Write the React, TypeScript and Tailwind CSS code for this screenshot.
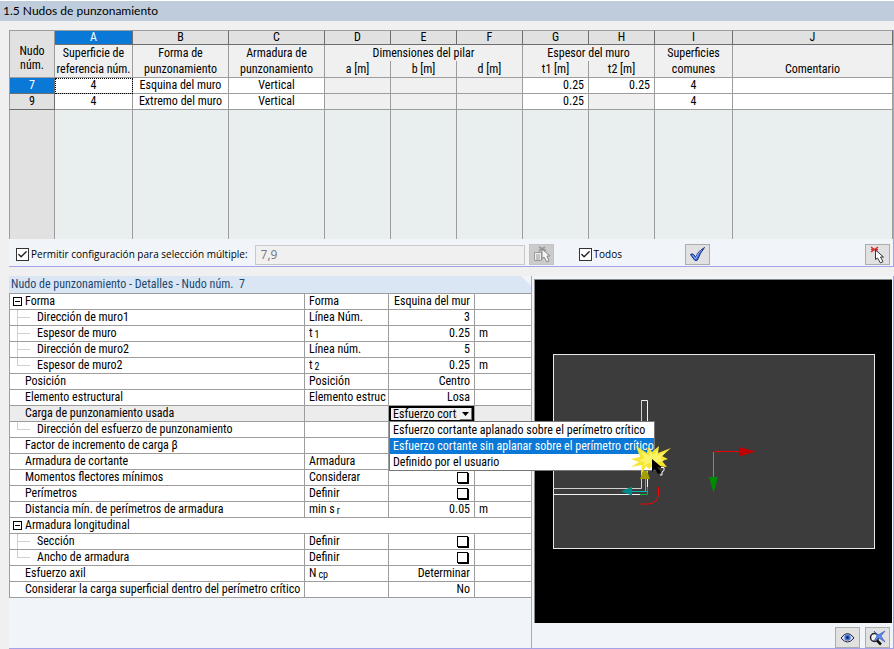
import React from 'react';
import clsx from 'clsx';
import { Check } from 'lucide-react';

const columns = [
  { letter: 'A', width: 'w-[78px]' },
  { letter: 'B', width: 'w-[96px]' },
  { letter: 'C', width: 'w-[96px]' },
  { letter: 'D', width: 'w-[66px]' },
  { letter: 'E', width: 'w-[66px]' },
  { letter: 'F', width: 'w-[66px]' },
  { letter: 'G', width: 'w-[66px]' },
  { letter: 'H', width: 'w-[66px]' },
  { letter: 'I', width: 'w-[78px]' },
  { letter: 'J', width: '' },
];

const nodes = [
  { id: 7, shape: 'Esquina del muro', t1: '0.25', t2: '0.25' },
  { id: 9, shape: 'Extremo del muro', t1: '0.25', t2: '' },
];

const loadOptions = [
  'Esfuerzo cortante aplanado sobre el perímetro crítico',
  'Esfuerzo cortante sin aplanar sobre el perímetro crítico',
  'Definido por el usuario',
];

interface DetailRow {
  label: string;
  kind?: 'group' | 'section' | 'child' | 'last';
  symbol?: string;
  sub?: string;
  value?: string;
  unit?: string;
  check?: boolean;
  combo?: boolean;
}

const details: DetailRow[] = [
  { label: 'Forma', kind: 'group', symbol: 'Forma', value: 'Esquina del mur' },
  { label: 'Dirección de muro1', kind: 'child', symbol: 'Línea Núm.', value: '3' },
  { label: 'Espesor de muro', kind: 'child', symbol: 't', sub: '1', value: '0.25', unit: 'm' },
  { label: 'Dirección de muro2', kind: 'child', symbol: 'Línea núm.', value: '5' },
  { label: 'Espesor de muro2', kind: 'last', symbol: 't', sub: '2', value: '0.25', unit: 'm' },
  { label: 'Posición', symbol: 'Posición', value: 'Centro' },
  { label: 'Elemento estructural', symbol: 'Elemento estruc', value: 'Losa' },
  { label: 'Carga de punzonamiento usada', combo: true },
  { label: 'Dirección del esfuerzo de punzonamiento', kind: 'last' },
  { label: 'Factor de incremento de carga β' },
  { label: 'Armadura de cortante', symbol: 'Armadura' },
  { label: 'Momentos flectores mínimos', symbol: 'Considerar', check: true },
  { label: 'Perímetros', symbol: 'Definir', check: true },
  { label: 'Distancia mín. de perímetros de armadura', symbol: 'min s', sub: 'r', value: '0.05', unit: 'm' },
  { label: 'Armadura longitudinal', kind: 'section' },
  { label: 'Sección', kind: 'child', symbol: 'Definir', check: true },
  { label: 'Ancho de armadura', kind: 'last', symbol: 'Definir', check: true },
  { label: 'Esfuerzo axil', symbol: 'N', sub: 'cp', value: 'Determinar' },
  { label: 'Considerar la carga superficial dentro del perímetro crítico', value: 'No' },
];

const CheckField: React.FC<{ id: string; label: string }> = ({ id, label }) => (
  <div className="flex items-center gap-[2px]">
    <span className="grid">
      <input
        id={id}
        type="checkbox"
        defaultChecked
        className="peer col-start-1 row-start-1 size-[13px] appearance-none border border-[#333] bg-white"
      />
      <Check className="pointer-events-none invisible col-start-1 row-start-1 size-[13px] p-px text-[#222] peer-checked:visible" strokeWidth={3} />
    </span>
    <label htmlFor={id} className="whitespace-nowrap">
      {label}
    </label>
  </div>
);

const IconButton: React.FC<{
  label: string;
  disabled?: boolean;
  className?: string;
  children: React.ReactNode;
}> = ({ label, disabled, className, children }) => (
  <button
    type="button"
    aria-label={label}
    disabled={disabled}
    className={clsx(
      'flex h-[21px] w-[25px] shrink-0 items-center justify-center border',
      disabled ? 'border-[#c4c4c4] bg-[#cbcbcb]' : 'border-[#adadad] bg-[#e1e1e1]',
      className
    )}
  >
    {children}
  </button>
);

const NodeTable: React.FC = () => {
  const cell = 'border-r border-b border-[#9d9d9d] p-0';
  const head = 'border-r border-[#9d9d9d] bg-[#f0f0f0] p-0 font-normal';
  return (
    <table className="w-full table-fixed border-separate border-spacing-0 text-center text-[12px] leading-[15px] whitespace-nowrap">
      <colgroup>
        <col className="w-[46px]" />
        {columns.map((c) => (
          <col key={c.letter} className={c.width} />
        ))}
      </colgroup>
      <thead>
        <tr className="h-[15px]">
          <th
            rowSpan={3}
            className="border border-[#9d9d9d] bg-[#e1e1e1] p-0 pt-[8px] leading-[14px] font-normal"
          >
            Nudo
            <br />
            núm.
          </th>
          {columns.map((c) => (
            <th
              key={c.letter}
              className={clsx(
                'border-t border-r border-b border-t-[#9d9d9d] border-r-[#6d6d6d] border-b-[#6d6d6d] p-0 leading-[13px] font-normal',
                c.letter === 'A' ? 'bg-[#0a78d6] text-white' : 'bg-[#e1e1e1]'
              )}
            >
              {c.letter}
            </th>
          ))}
        </tr>
        <tr className="h-[16px]">
          <th className={head}>Superficie de</th>
          <th className={head}>Forma de</th>
          <th className={head}>Armadura de</th>
          <th colSpan={3} className={head}>Dimensiones del pilar</th>
          <th colSpan={2} className={head}>Espesor del muro</th>
          <th className={head}>Superficies</th>
          <th className={head}></th>
        </tr>
        <tr className="h-[17px]">
          {[
            'referencia núm.',
            'punzonamiento',
            'punzonamiento',
            'a [m]',
            'b [m]',
            'd [m]',
            't1 [m]',
            't2 [m]',
            'comunes',
            'Comentario',
          ].map((text, i) => (
            <th key={i} className={clsx(head, 'border-b')}>
              {text}
            </th>
          ))}
        </tr>
      </thead>
      <tbody>
        {nodes.map((n, i) => (
          <tr key={n.id} className="h-[16px] bg-white">
            <th
              scope="row"
              className={clsx(
                cell,
                'border-l border-r-[#6d6d6d] border-b-[#6d6d6d] font-normal',
                i === 0 ? 'bg-[#0a78d6] text-white' : 'bg-[#e1e1e1]'
              )}
            >
              {n.id}
            </th>
            <td className={clsx(cell, i === 0 && 'outline-1 -outline-offset-1 outline-black outline-dotted')}>4</td>
            <td className={cell}>{n.shape}</td>
            <td className={cell}>Vertical</td>
            <td className={clsx(cell, 'bg-[#f0f0f0]')}></td>
            <td className={clsx(cell, 'bg-[#f0f0f0]')}></td>
            <td className={clsx(cell, 'bg-[#f0f0f0]')}></td>
            <td className={clsx(cell, 'pr-1 text-right')}>{n.t1}</td>
            <td className={clsx(cell, 'pr-1 text-right', !n.t2 && 'bg-[#f0f0f0]')}>{n.t2}</td>
            <td className={cell}>4</td>
            <td className={cell}></td>
          </tr>
        ))}
        <tr className="h-[129px] bg-[#e9eeee]">
          <td className="border-x border-[#9d9d9d] bg-[#e1e1e1] p-0"></td>
          {columns.map((c) => (
            <td key={c.letter} className="border-r border-[#9d9d9d] p-0"></td>
          ))}
        </tr>
      </tbody>
    </table>
  );
};

// Burst and pointer drawn over the open list
const ClickMark: React.FC = () => (
  <svg className="pointer-events-none absolute top-[37px] left-[241px]" width="44" height="36" viewBox="0 0 44 36" aria-hidden="true">
    <path
      d="M6 3l11 7 1-6 4 5 7-6-1 7 13-5-9 8 6 3-6 2 5 6-9-1 1 4-7-4-3 3-3-3-5 9 1-10-11 2 8-5-8-3 9-2z"
      fill="#f4e632"
    />
    <path d="M11 8l8 5 1-5 3 4 5-5-1 6 9-4-6 6 4 3-7 1-4 4-4-3-6 3 2-4-6-1 5-3z" fill="#fbf468" />
    <path d="M22 16v13l3-3 3 5 3-1.500-3-5h4z" fill="#000" />
    <path d="M31 24.500h3v3l-2 1.500v3h-2" fill="none" stroke="#fff" />
  </svg>
);

const LoadCombo: React.FC = () => (
  <div className="relative z-10 -mb-px">
    <div className="relative">
      <select
        aria-label="Carga de punzonamiento usada"
        defaultValue={loadOptions[1]}
        className="block h-[16px] w-full appearance-none border-2 border-black bg-[#f0f0f0] pr-[15px] pl-[2px] leading-[12px] outline-none"
      >
        {loadOptions.map((o) => (
          <option key={o}>{o}</option>
        ))}
      </select>
      <span className="pointer-events-none absolute top-[2px] right-[2px] flex h-[12px] w-[12px] items-center justify-center border-r border-b border-[#777] bg-[#f3f3f3]">
        <svg width="7" height="4" viewBox="0 0 7 4" aria-hidden="true">
          <path d="M0 0h7L3.500 4z" fill="#000" />
        </svg>
      </span>
    </div>
    <ul role="listbox" className="absolute top-[15px] left-0 w-[266px] border border-[#777] bg-white text-left">
      {loadOptions.map((o, i) => (
        <li
          key={o}
          role="option"
          aria-selected={i === 1}
          className={clsx('h-[16px] pl-[3px] leading-[16px]', i === 1 && 'bg-[#0a78d6] text-white')}
        >
          {o}
        </li>
      ))}
    </ul>
    <ClickMark />
  </div>
);

const RowLabel: React.FC<{ row: DetailRow }> = ({ row }) => {
  if (row.kind === 'group' || row.kind === 'section') {
    return (
      <div className="flex items-center gap-[3px] pl-[3px]">
        <button type="button" aria-label={`Contraer ${row.label}`} className="flex size-[9px] items-center justify-center border border-black bg-white">
          <span className="h-px w-[5px] bg-black" />
        </button>
        <span>{row.label}</span>
      </div>
    );
  }
  if (row.kind) {
    return (
      <div className="flex gap-[7px] pl-[7px]">
        <span className="flex h-[15px] w-[13px] flex-col">
          <span className="h-[8px] border-b border-l border-[#cfcfcf]" />
          {row.kind === 'child' && <span className="flex-1 border-l border-[#cfcfcf]" />}
        </span>
        <span>{row.label}</span>
      </div>
    );
  }
  return <div className="pl-[15px]">{row.label}</div>;
};

const DetailTable: React.FC = () => {
  const cell = 'border-r border-b border-[#9d9d9d] p-0';
  return (
    <table className="w-full table-fixed border-separate border-spacing-0 border-t border-l border-[#9d9d9d] bg-white text-left text-[12px] leading-[15px] whitespace-nowrap">
      <colgroup>
        <col className="w-[295px]" />
        <col className="w-[84px]" />
        <col className="w-[86px]" />
        <col />
      </colgroup>
      <tbody>
        {details.map((row) => (
          <tr key={row.label} className={clsx('h-[16px]', row.combo && 'bg-[#ececec]')}>
            <th scope="row" colSpan={row.kind === 'section' ? 4 : 1} className={clsx(cell, 'font-normal', row.kind === 'section' && 'border-r-0')}>
              <RowLabel row={row} />
            </th>
            {row.kind !== 'section' && (
              <>
                <td className={clsx(cell, 'pl-1')}>
                  {row.symbol}
                  {row.sub && <span className="ml-[2px] inline-block translate-y-[1px] text-[10px] leading-[12px]">{row.sub}</span>}
                </td>
                <td className={clsx(cell, 'text-right', !row.combo && 'pr-1')}>
                  {row.combo && <LoadCombo />}
                  {row.check && (
                    <input
                      type="checkbox"
                      aria-label={row.label}
                      className="mr-[2px] ml-auto block size-[11px] appearance-none border border-black bg-white shadow-[1px_1px_0_#000]"
                    />
                  )}
                  {row.value}
                </td>
                <td className="border-b border-[#9d9d9d] p-0 pl-1">{row.unit}</td>
              </>
            )}
          </tr>
        ))}
      </tbody>
    </table>
  );
};

const WallScene: React.FC = () => (
  <svg
    className="block h-full w-full"
    viewBox="0 0 357 343"
    preserveAspectRatio="xMinYMin meet"
    role="img"
    aria-label="Losa con esquina de muro"
  >
    <rect x="18.500" y="74.500" width="321" height="194" fill="#3c3c3c" stroke="#e8e8e8" />
    <g fill="none" stroke="#f4f4f4">
      <path d="M112.500 214V120.500H106.500" />
      <path d="M106.500 120V208.500H18" stroke="#d0d0d0" />
      <path d="M18 214.500H106" />
    </g>
    <path d="M112.500 207V214.500H105" fill="none" stroke="#00c040" />
    <path d="M123.500 207v7q-1 9-10 10h-8" fill="none" stroke="#ff0000" />
    <path d="M110.500 212V198" stroke="#b0a800" />
    <path d="M105 199h10l-5-14z" fill="#a69d00" />
    <path d="M97 211.500h15" stroke="#00b8b8" />
    <path d="M86 211.500l11-5v9z" fill="#008b8b" />
    <g shapeRendering="crispEdges">
      <path d="M178.500 171.500H204" stroke="#f00000" />
      <path d="M178.500 172V197" stroke="#00e000" />
    </g>
    <path d="M204 167l17 4.500-17 5z" fill="#c00000" />
    <path d="M174 197h9l-4.500 16z" fill="#008a00" />
  </svg>
);

const App: React.FC = () => {
  return (
    <div className="flex min-h-screen flex-col bg-[#f0f0f0] font-['Roboto_Condensed',Roboto,sans-serif] text-black">
      <h1 className="h-[21px] border-t border-white bg-[#bfccdb] pl-[3px] font-[Lato,sans-serif] text-[12px] leading-[20px]">
        1.5 Nudos de punzonamiento
      </h1>

      <section className="mt-[9px] ml-[9px] border-r border-b border-[#a3a3ea] bg-[#f1f5fa]">
        <NodeTable />
        <div className="flex h-[27px] items-center pt-[4px] pr-[3px] pl-[7px] font-['Open_Sans',sans-serif] text-[10px]">
          <CheckField id="multiple" label="Permitir configuración para selección múltiple:" />
          <input
            type="text"
            aria-label="Nudos seleccionados"
            defaultValue="7,9"
            disabled
            className="ml-[7px] h-[20px] min-w-0 flex-1 border border-[#c8c8c8] bg-[#f0f0f0] px-[5px] text-[12px] text-[#777]"
          />
          <IconButton label="Elegir de la lista" disabled className="mr-[25px] ml-[4px]">
            <svg width="19" height="17" viewBox="0 0 19 17" aria-hidden="true">
              <path d="M2.500 6.500h7v8h-7z" fill="#eee" stroke="#999" />
              <path d="M4 9h4M4 11h4M4 13h4" stroke="#999" />
              <path d="M7 1l7 4M7 5l6-4" stroke="#999" strokeWidth="2" />
              <path d="M10 3v10l2-2 3 5 2-1-2-5h3z" fill="#f4f4f4" stroke="#888" />
            </svg>
          </IconButton>
          <CheckField id="todos" label="Todos" />
          <IconButton label="Aplicar" className="mr-[155px] ml-[63px]">
            <svg width="17" height="17" viewBox="0 0 17 17" aria-hidden="true">
              <path d="M1.500 8.500q2-1.500 3.500.5l1.500 2Q9 5 15.500 1.500 11 7 8.500 14q-1.500 1.500-3 0z" fill="#3f6fdc" stroke="#1d2f86" strokeLinejoin="round" />
              <path d="M3.500 9l3 4Q8.500 7.500 12.500 4" fill="none" stroke="#8fb0f5" />
            </svg>
          </IconButton>
          <IconButton label="Seleccionar en el gráfico">
            <svg width="17" height="18" viewBox="0 0 17 18" aria-hidden="true">
              <path d="M2 1l7 5M2 6l7-5M2 3.500h7" stroke="#d93038" strokeWidth="1.500" />
              <path d="M6.500 4v9.500l2-1.500 3 5 2.500-1.500-2.500-4.500h3z" fill="#fff" stroke="#333" />
            </svg>
          </IconButton>
        </div>
      </section>

      <main className="mt-[9px] ml-[9px] grid flex-1 grid-cols-[523fr_362fr]">
        <section className="flex flex-col border-r border-b border-[#a3a3ea] bg-[#f1f5fa]">
          <h2 className="h-[17px] bg-[#dbe6f5] pl-[2px] text-[12px] leading-[16px] whitespace-pre text-[#1c4770] [clip-path:polygon(0_0,calc(100%_-_10px)_0,100%_10px,100%_100%,0_100%)]">
            {'Nudo de punzonamiento - Detalles - Nudo núm.  7'}
          </h2>
          <DetailTable />
        </section>

        <section className="flex flex-col border-r border-b border-[#a3a3ea] bg-[#f1f5fa] pt-[3px] pl-[2px]">
          <div className="mr-px flex-1 border-t border-l border-[#888] bg-black">
            <WallScene />
          </div>
          <div className="flex justify-end gap-[5px] pt-[4px] pr-[3px]">
            <IconButton label="Mostrar">
              <svg width="15" height="11" viewBox="0 0 15 11" aria-hidden="true">
                <path d="M1 6q6.500-9 13 0-6.500 8-13 0z" fill="#dfe6f5" stroke="#222" />
                <circle cx="7.500" cy="5.500" r="3.200" fill="#4a74e0" />
                <circle cx="7.500" cy="5.500" r="1.300" fill="#0b1740" />
              </svg>
            </IconButton>
            <IconButton label="Restablecer vista">
              <svg width="19" height="17" viewBox="0 0 19 17" aria-hidden="true">
                <circle cx="6.500" cy="8.500" r="4" fill="#f4f4f4" stroke="#222" strokeWidth="1.500" />
                <path d="M9 11.500l4 4" stroke="#111" strokeWidth="2.500" />
                <path d="M6 2l4 4 7-4-4 5 4 6-6-4-5 3 3-5z" fill="#5b8aec" stroke="#2b4bb0" strokeWidth="0.600" />
              </svg>
            </IconButton>
          </div>
        </section>
      </main>
    </div>
  );
};

export default App;
